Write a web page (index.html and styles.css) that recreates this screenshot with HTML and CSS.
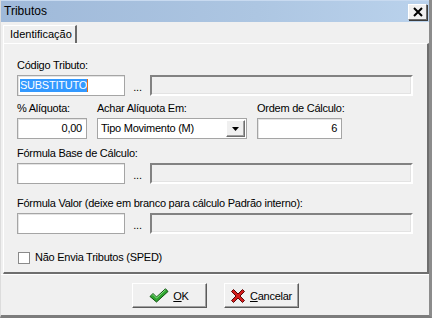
FILE: index.html
```html
<!DOCTYPE html>
<html lang="pt-BR">
<head>
  <meta charset="UTF-8">
  <title>Tributos</title>
  <link rel="stylesheet" href="styles.css">
</head>
<body>
  <div class="window">
    <div class="titlebar">
      <span class="title">Tributos</span>
      <button class="close" aria-label="Fechar">
        <svg viewBox="0 0 10 10" width="10" height="10" aria-hidden="true">
          <path d="M1 1L9 9M9 1L1 9" stroke="#000" stroke-width="2" fill="none"/>
        </svg>
      </button>
    </div>

    <div class="tabs">
      <div class="tab">Identificação</div>
    </div>

    <div class="panel">
      <!-- Código -->
      <div class="label">Código Tributo:</div>
      <div class="line">
        <div class="input wide"><span class="selected">SUBSTITUTO</span><span class="caret"></span></div>
        <span class="dots">...</span>
        <div class="disabled"></div>
      </div>

      <!-- Alíquota / Achar / Ordem -->
      <div class="row row-2">
        <div class="field">
          <div class="label">% Alíquota:</div>
          <div class="input num aliq">0,00</div>
        </div>
        <div class="field">
          <div class="label">Achar Alíquota Em:</div>
          <div class="select">
            <span>Tipo Movimento (M)</span>
            <span class="drop">
              <svg viewBox="0 0 7 4" width="7" height="4" aria-hidden="true"><path d="M0 0H7L3.5 4Z" fill="#000"/></svg>
            </span>
          </div>
        </div>
        <div class="field">
          <div class="label">Ordem de Cálculo:</div>
          <div class="input num ordem">6</div>
        </div>
      </div>

      <!-- Fórmula base -->
      <div class="label row-3">Fórmula Base de Cálculo:</div>
      <div class="line">
        <div class="input wide"></div>
        <span class="dots">...</span>
        <div class="disabled"></div>
      </div>

      <!-- Fórmula valor -->
      <div class="label row-4">Fórmula Valor (deixe em branco para cálculo Padrão interno):</div>
      <div class="line">
        <div class="input wide"></div>
        <span class="dots">...</span>
        <div class="disabled"></div>
      </div>

      <label class="check">
        <span class="box"></span>
        Não Envia Tributos (SPED)
      </label>
    </div>

    <div class="buttons">
      <button class="btn">
        <svg viewBox="0 0 20 15" width="20" height="15" aria-hidden="true">
          <path d="M1 8.5L4 5.5L7.5 9L16.5 0.8L19 3.5L7.5 14Z" fill="#2fa52f" stroke="#0b4d0b" stroke-width="1"/>
          <path d="M3 7.5L4 6.5L7.5 10L16.5 1.8" stroke="#8be08b" stroke-width="1" fill="none"/>
        </svg>
        <span><u>O</u>K</span>
      </button>
      <button class="btn">
        <svg viewBox="0 0 16 16" width="16" height="16" aria-hidden="true">
          <path d="M1.5 3.5L3.5 1.5L8 6L12.5 1.5L14.5 3.5L10 8L14.5 12.5L12.5 14.5L8 10L3.5 14.5L1.5 12.5L6 8Z" fill="#d41c1c" stroke="#5a0606" stroke-width="1"/>
        </svg>
        <span><u>C</u>ancelar</span>
      </button>
    </div>
  </div>
</body>
</html>
```

FILE: styles.css
```css
/* Base */
* {
  margin: 0;
  padding: 0;
  box-sizing: border-box;
}

body {
  font-family: "Liberation Sans", Arial, sans-serif;
  font-size: 11px;
  line-height: 13px;
  letter-spacing: -0.25px;
  color: #000000;
  background-color: #f0f0f0;
}

/* Window frame */
.window {
  width: 432px;
  height: 318px;
  background-color: #f0f0f0;
  border-right: 3px solid #8c8c8c;
  border-bottom: 3px solid #7c7c7c;
  border-left: 1px solid #dcdcdc;
  display: flex;
  flex-direction: column;
}

/* Title bar */
.titlebar {
  height: 22px;
  display: flex;
  align-items: center;
  justify-content: space-between;
  padding: 0 1px 0 3px;
  background: linear-gradient(to right, #9fb9d9, #adc6e2 60%, #bad2ec);
  border-top: 1px solid #c8daf0;
}

.title {
  font-size: 12px;
  letter-spacing: 0;
  color: #000000;
}

.close {
  width: 19px;
  height: 16px;
  display: flex;
  align-items: center;
  justify-content: center;
  background-color: #f0f0f0;
  border: 1px solid;
  border-color: #ffffff #6e6e6e #6e6e6e #ffffff;
  box-shadow: 1px 1px 0 #3c3c3c;
  margin-right: 1px;
}

/* Tabs */
.tabs {
  display: flex;
  padding: 3px 0 0 2px;
  height: 21px;
}

.tab {
  width: 74px;
  height: 18px;
  padding: 2px 0 0 6px;
  letter-spacing: 0;
  background-color: #f0f0f0;
  border-top: 1px solid #ffffff;
  border-left: 1px solid #ffffff;
  border-right: 2px solid #6a6a6a;
  position: relative;
  z-index: 1;
  margin-bottom: -1px;
}

/* Tab page */
.panel {
  margin-left: 2px;
  width: 426px;
  height: 231px;
  border-top: 1px solid #ffffff;
  border-left: 1px solid #ffffff;
  border-right: 2px solid #6e6e6e;
  border-bottom: 2px solid #6e6e6e;
  padding: 15px 0 0 13px;
  display: flex;
  flex-direction: column;
}

.label {
  margin-bottom: 3px;
  white-space: nowrap;
}

.line {
  display: flex;
  align-items: flex-end;
}

.row {
  display: flex;
  gap: 10px;
}

.row-2 {
  margin-top: 6px;
}

.row-3 {
  margin-top: 8px;
}

.row-4 {
  margin-top: 13px;
}

/* Inputs */
.input {
  height: 21px;
  background-color: #ffffff;
  border: 1px solid #a5a5a5;
  box-shadow: inset 1px 1px 0 #e4e4e4;
  padding: 3px 3px 0 2px;
  display: flex;
  align-items: flex-start;
}

.wide {
  width: 108px;
}

.num {
  justify-content: flex-end;
  padding-right: 4px;
}

.aliq {
  width: 70px;
}

.ordem {
  width: 85px;
}

.selected {
  background-color: #3399ff;
  color: #ffffff;
}

.caret {
  width: 1px;
  height: 13px;
  background-color: #e07020;
}

.dots {
  width: 25px;
  text-align: center;
  padding-bottom: 2px;
}

.disabled {
  width: 263px;
  height: 21px;
  background-color: #f0f0f0;
  border: 2px solid;
  border-color: #828282 #ffffff #ffffff #828282;
  box-shadow: inset -1px -1px 0 #e3e3e3;
}

/* Combo box */
.select {
  width: 150px;
  height: 21px;
  background-color: #ffffff;
  border: 1px solid #a5a5a5;
  display: flex;
  align-items: center;
  justify-content: space-between;
  padding: 0 1px 0 3px;
}

.drop {
  width: 19px;
  height: 17px;
  display: flex;
  align-items: center;
  justify-content: center;
  background-color: #f0f0f0;
  border: 1px solid;
  border-color: #ffffff #6e6e6e #6e6e6e #ffffff;
  box-shadow: inset -1px -1px 0 #a0a0a0;
}

/* Checkbox */
.check {
  display: flex;
  align-items: center;
  gap: 5px;
  margin-top: 17px;
  margin-left: 1px;
}

.box {
  width: 12px;
  height: 12px;
  background-color: #ffffff;
  border: 1px solid #8a8a8a;
}

/* Bottom buttons */
.buttons {
  flex: 1;
  display: flex;
  justify-content: center;
  align-items: flex-start;
  gap: 17px;
  padding-top: 8px;
  border-top: 1px solid #ffffff;
}

.btn {
  width: 75px;
  height: 25px;
  display: flex;
  align-items: center;
  justify-content: center;
  gap: 4px;
  font-family: "Liberation Sans", Arial, sans-serif;
  font-size: 11px;
  letter-spacing: -0.25px;
  background-color: #f0f0f0;
  border: 1px solid;
  border-color: #ffffff #5a5a5a #5a5a5a #ffffff;
  box-shadow: inset -1px -1px 0 #a0a0a0;
}

.btn u {
  text-decoration: underline;
}
```
